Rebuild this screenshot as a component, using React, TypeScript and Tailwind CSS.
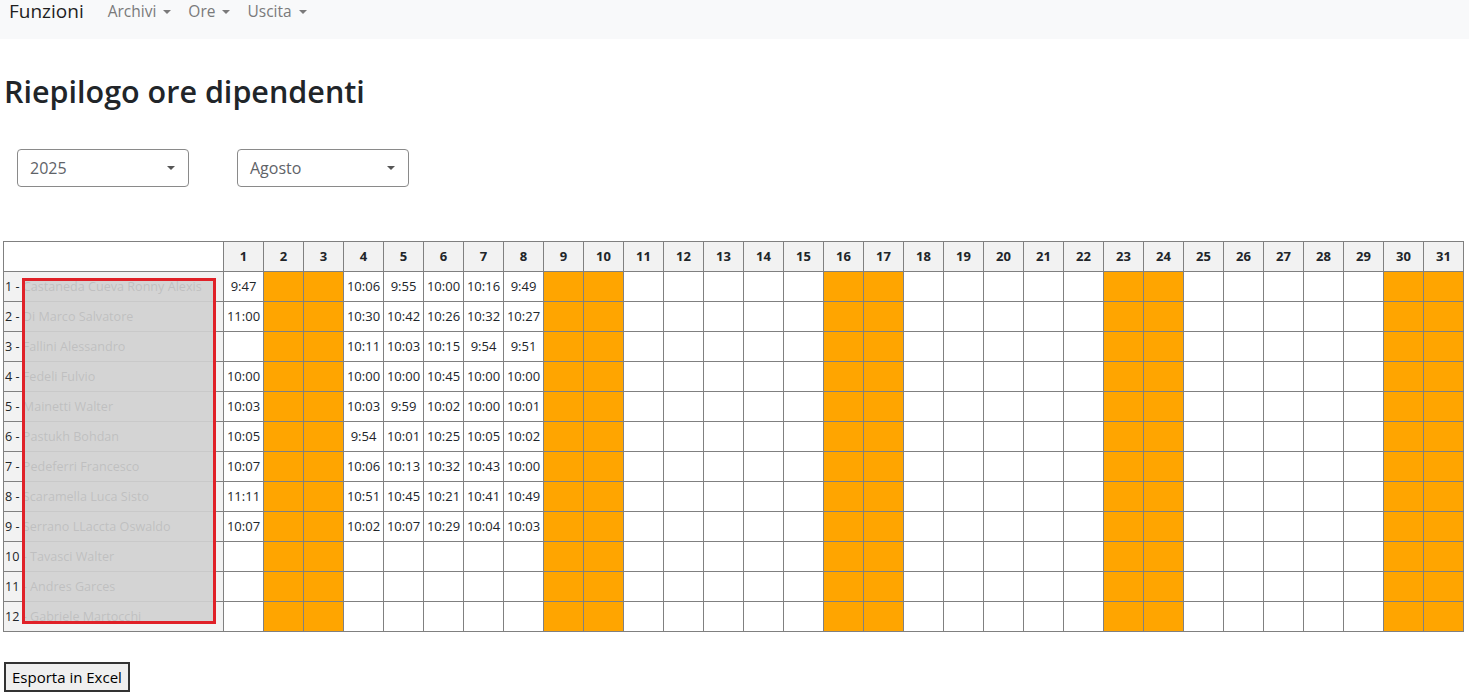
import React from "react";

const names = [
  "Castaneda Cueva Ronny Alexis",
  "Di Marco Salvatore",
  "Fallini Alessandro",
  "Fedeli Fulvio",
  "Mainetti Walter",
  "Pastukh Bohdan",
  "Pedeferri Francesco",
  "Scaramella Luca Sisto",
  "Serrano LLaccta Oswaldo",
  "Tavasci Walter",
  "Andres Garces",
  "Gabriele Martocchi",
];

const times: string[][] = [
  ["9:47", "10:06", "9:55", "10:00", "10:16", "9:49"],
  ["11:00", "10:30", "10:42", "10:26", "10:32", "10:27"],
  ["", "10:11", "10:03", "10:15", "9:54", "9:51"],
  ["10:00", "10:00", "10:00", "10:45", "10:00", "10:00"],
  ["10:03", "10:03", "9:59", "10:02", "10:00", "10:01"],
  ["10:05", "9:54", "10:01", "10:25", "10:05", "10:02"],
  ["10:07", "10:06", "10:13", "10:32", "10:43", "10:00"],
  ["11:11", "10:51", "10:45", "10:21", "10:41", "10:49"],
  ["10:07", "10:02", "10:07", "10:29", "10:04", "10:03"],
  ["", "", "", "", "", ""],
  ["", "", "", "", "", ""],
  ["", "", "", "", "", ""],
];

const weekend = new Set([2, 3, 9, 10, 16, 17, 23, 24, 30, 31]);
const days = Array.from({ length: 31 }, (_, i) => i + 1);

function cellValue(row: number, day: number): string {
  const map: Record<number, number> = { 1: 0, 4: 1, 5: 2, 6: 3, 7: 4, 8: 5 };
  if (day in map) return times[row][map[day]];
  return "";
}

function Caret() {
  return (
    <span className="inline-block w-0 h-0 border-l-[4px] border-r-[4px] border-t-[4px] border-l-transparent border-r-transparent border-t-current ml-[7px] align-[3px]" />
  );
}

function Select({ value }: { value: string }) {
  return (
    <div className="w-[172px] h-[38px] border border-[#8a8a8a] rounded-[4px] flex items-center justify-between pl-[12px] pr-[13px] text-[16px] text-[#5f6368] bg-white">
      <span>{value}</span>
      <span className="w-0 h-0 border-l-[4px] border-r-[4px] border-t-[4px] border-l-transparent border-r-transparent border-t-[#555]" />
    </div>
  );
}

export default function App() {
  return (
    <div
      className="relative bg-white text-[#212529] min-h-[699px]"
      style={{ fontFamily: '"Open Sans", "Noto Sans", sans-serif' }}
    >
      <nav className="h-[39px] bg-[#f8f9fa] flex items-start pl-[9px]">
        <span className="text-[19px] leading-[23px] text-[#1f1f1f] mr-[24px]">Funzioni</span>
        <div className="flex gap-[17px] text-[15.5px] leading-[23px] text-[#7a7a7a]">
          <span>
            Archivi
            <Caret />
          </span>
          <span>
            Ore
            <Caret />
          </span>
          <span>
            Uscita
            <Caret />
          </span>
        </div>
      </nav>

      <h2 className="mt-[34px] ml-[4px] text-[30.5px] leading-[36px] font-semibold">
        Riepilogo ore dipendenti
      </h2>

      <div className="flex gap-[48px] ml-[17px] mt-[40px]">
        <Select value="2025" />
        <Select value="Agosto" />
      </div>

      <div className="relative ml-[3px] mt-[54px] w-[1461px]">
        <table className="border-collapse table-fixed text-[13px]">
          <thead>
            <tr className="h-[30px]">
              <th className="w-[220px] border border-[#808080] bg-white p-0" />
              {days.map((d) => (
                <th
                  key={d}
                  className="w-[40px] border border-[#808080] bg-[#f2f2f2] font-bold text-center p-0"
                >
                  {d}
                </th>
              ))}
            </tr>
          </thead>
          <tbody>
            {names.map((n, r) => (
              <tr key={r} className="h-[30px]">
                <td className="border border-[#808080] bg-[#f2f2f2] p-0 pl-[1px] pt-[1px] text-left whitespace-nowrap overflow-hidden text-[12.6px]">
                  {r + 1} - {n}
                </td>
                {days.map((d) => (
                  <td
                    key={d}
                    className={
                      "border border-[#808080] text-center p-0 pt-[1px] " +
                      (weekend.has(d) ? "bg-[#ffa500]" : "bg-white")
                    }
                  >
                    {weekend.has(d) ? "" : cellValue(r, d)}
                  </td>
                ))}
              </tr>
            ))}
          </tbody>
        </table>
        <div className="absolute left-[19px] top-[37px] w-[194px] h-[346px] border-[3px] border-[#e02128] bg-[rgba(208,208,208,0.9)]" />
      </div>

      <div className="ml-[4px] mt-[30px]">
        <button className="h-[30px] px-[6px] border-2 border-[#333] bg-[#efefef] text-[15px] text-black">
          Esporta in Excel
        </button>
      </div>
    </div>
  );
}
